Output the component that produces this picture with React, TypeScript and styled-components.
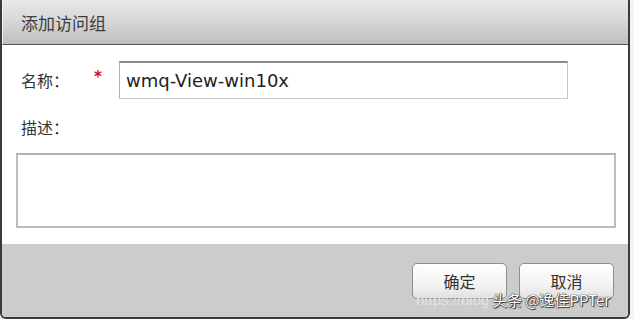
import React from "react";
import styled, { createGlobalStyle } from "styled-components";

const Global = createGlobalStyle`
  html, body { margin: 0; padding: 0; background: #f4f4f4; }
  *, *::before, *::after { box-sizing: border-box; }
  body { font-family: "DejaVu Sans", "Noto Sans CJK SC", sans-serif; }
`;

const Dialog = styled.div`
  position: relative;
  width: 630px;
  height: 319px;
  border: 2px solid #3a3a3a;
  border-top: none;
  border-radius: 0 0 6px 6px;
  background: #fff;
  display: flex;
  flex-direction: column;
  overflow: hidden;
`;

const TitleBar = styled.div`
  height: 45px;
  flex: none;
  border-bottom: 1px solid #555;
  border-left: 1px solid #f2f2f2;
  background: linear-gradient(to bottom, #e8e8ea 0%, #d8d8da 45%, #bfbfbf 100%);
  display: flex;
  align-items: center;
  padding-left: 18px;
  font-family: "Noto Sans CJK SC", sans-serif;
  font-size: 17px;
  color: #3c3c3c;
`;

const Body = styled.div`
  flex: 1;
  display: flex;
  flex-direction: column;
  padding: 16px 12px 0 14px;
`;

const Row = styled.div`
  display: flex;
  align-items: center;
  height: 38px;
`;

const Label = styled.span`
  width: 78px;
  padding-left: 5px;
  font-family: "Noto Sans CJK SC", sans-serif;
  font-size: 16px;
  color: #333;
`;

const Star = styled.span`
  width: 25px;
  color: #cc1111;
  font-family: "DejaVu Sans", sans-serif;
  font-size: 15px;
  font-weight: bold;
  position: relative;
  top: -3px;
`;

const TextInput = styled.div`
  width: 449px;
  height: 38px;
  border: 1px solid #c8c8c8;
  border-top: 2px solid #8a8a8a;
  border-left: 1px solid #b0b0b0;
  display: flex;
  align-items: center;
  padding-left: 6px;
  font-family: "DejaVu Sans", sans-serif;
  font-size: 18px;
  color: #222;
`;

const DescRow = styled.div`
  height: 24px;
  margin-top: 16px;
  display: flex;
  align-items: center;
`;

const TextArea = styled.div`
  margin-top: 14px;
  width: 600px;
  height: 75px;
  border: 2px solid #bdbdbd;
  border-top-color: #b3b3b3;
  background: #fff;
`;

const Footer = styled.div`
  flex: none;
  height: 73px;
  background: #cccccc;
  display: flex;
  justify-content: flex-end;
  align-items: flex-start;
  gap: 12px;
  padding: 19px 14px 0 0;
`;

const Button = styled.div`
  width: 95px;
  height: 36px;
  border: 1px solid #8e8e8e;
  border-radius: 5px;
  background: linear-gradient(to bottom, #ffffff 0%, #f3f3f3 60%, #e2e2e2 100%);
  display: flex;
  align-items: center;
  justify-content: center;
  font-family: "Noto Sans CJK SC", sans-serif;
  font-size: 16px;
  color: #333;
`;

const Watermark = styled.div`
  position: absolute;
  left: 414px;
  top: 291px;
  display: flex;
  align-items: center;
  gap: 4px;
  font-size: 15px;
  line-height: 18px;
  white-space: nowrap;
`;

const WmUrl = styled.span`
  font-family: "Liberation Sans", sans-serif;
  color: #e2e2e2;
  width: 72px;
  overflow: hidden;
`;

const WmName = styled.span`
  font-family: "Noto Sans CJK SC", sans-serif;
  color: #fff;
  text-shadow: 0 0 1px #222, 0 0 1px #222, 1px 1px 1px #333;
`;

export default function App() {
  return (
    <>
      <Global />
      <Dialog>
        <TitleBar>添加访问组</TitleBar>
        <Body>
          <Row>
            <Label>名称：</Label>
            <Star>*</Star>
            <TextInput>wmq-View-win10x</TextInput>
          </Row>
          <DescRow>
            <Label>描述：</Label>
          </DescRow>
          <TextArea />
        </Body>
        <Footer>
          <Button>确定</Button>
          <Button>取消</Button>
        </Footer>
        <Watermark>
          <WmUrl>https://blog</WmUrl>
          <WmName>头条 @逸佳PPTer</WmName>
        </Watermark>
      </Dialog>
    </>
  );
}
